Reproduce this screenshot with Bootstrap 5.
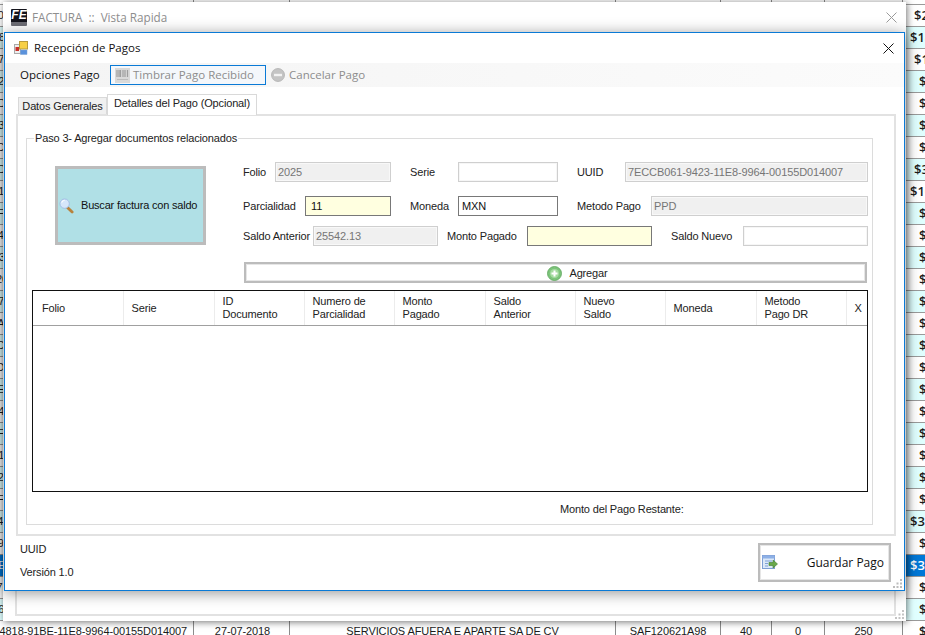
<!DOCTYPE html>
<html lang="es">
<head>
<meta charset="utf-8">
<title>Recepción de Pagos</title>
<link href="https://cdn.jsdelivr.net/npm/bootstrap@5.3.0/dist/css/bootstrap.min.css" rel="stylesheet">
<style>
html,body{height:635px;overflow:hidden;background:#fff}
body{font:11px/14px "Liberation Sans",sans-serif;letter-spacing:-.15px;color:#1c1c1c;position:relative;width:925px}
/* datagrid behind the windows */
.grid-bg{position:absolute;left:-60px;top:-17px;width:1100px}
.grid-row{display:flex;height:22px;border-bottom:1px solid #9a9a9a;line-height:21px;background:#fff;white-space:nowrap;overflow:hidden;font-size:11px;letter-spacing:-.1px}
.grid-row.alt{background:#e0ffff}
.grid-row.sel{background:#0078d7;color:#fff}
.cell-uuid{width:254px;text-align:right;padding-right:6px;border-right:1px solid #8c8c8c;flex:none}
.cell-date{width:96px;text-align:center;border-right:1px solid #8c8c8c;flex:none;padding-left:2px}
.cell-name{width:326px;text-align:center;border-right:1px solid #8c8c8c;flex:none}
.cell-rfc{width:105px;text-align:center;border-right:1px solid #8c8c8c;flex:none}
.cell-a{width:51px;text-align:center;border-right:1px solid #8c8c8c;flex:none}
.cell-b{width:53px;text-align:center;border-right:1px solid #8c8c8c;flex:none}
.cell-c{width:78px;text-align:center;border-right:1px solid #8c8c8c;flex:none}
.cell-gap{width:709px;flex:none}
.cell-amt{font-size:13px;font-family:"Open Sans",sans-serif;font-weight:600;flex:none;letter-spacing:0}
.amt-s{padding-left:16px}.amt-m{padding-left:11px}.amt-l{padding-left:7px}
/* back window */
.back-win{position:absolute;left:3px;top:2px;width:903px;height:619px;background:#fff;box-shadow:1px 1px 7px rgba(0,0,0,.55);display:flex;flex-direction:column}
.back-title{height:30px;flex:none;padding-left:8px;color:#8e8e8e;font:11.700px/14px "Open Sans",sans-serif;letter-spacing:0;gap:5px;white-space:pre}
.fe-logo{width:16px;height:17px;background:#14141c;border-radius:1px;color:#fff;font:italic bold 12px/12px "Liberation Sans",sans-serif;text-align:center;flex:none;border-bottom:4px solid #6d6d75}
.back-x{margin-left:auto;margin-right:9px}
.back-panel{flex:1;margin:0 10px 5px 12px;border:2px solid #e2e2e2}
.grip{position:absolute;right:1px;bottom:1px}
/* front window */
.dlg{position:absolute;left:4px;top:32px;width:901px;height:559px;background:#fff;border:1px solid #0a7ad6;box-shadow:0 2px 14px rgba(0,0,0,.42);display:flex;flex-direction:column}
.dlg-title{height:30px;flex:none;padding-left:9px;gap:6px;font:11.500px/14px "Open Sans",sans-serif;letter-spacing:0;color:#111}
.dlg-x{margin-left:auto;margin-right:10px}
.tool-strip{height:24px;flex:none;padding-left:15px;background:linear-gradient(90deg,#f4f4f4,#fbfbfb);font:11.500px/14px "Open Sans",sans-serif;letter-spacing:0}
.tool-label{width:90px;flex:none;color:#111}
.tool-btn{width:156px;height:20px;border:1px solid #0a7ad6;background:#f4f7fb;color:#8d8d8d;padding:0 0 0 4px;gap:3px;flex:none;display:flex;align-items:center;font:11.500px/14px "Open Sans",sans-serif;border-radius:0}
.tool-plain{color:#8d8d8d;gap:4px;margin-left:5px}
.tabbar{margin:7px 0 0 13px;height:20px;flex:none;align-items:flex-end;border:0;position:relative;z-index:2;white-space:nowrap}
.tab-off{width:89px;height:17px;background:#f0f0f0;border:1px solid #d9d9d9;border-bottom:0;line-height:16px;text-align:center;color:#222}
.tab-on{width:150px;height:21px;background:#fff;border:1px solid #d9d9d9;border-bottom:0;line-height:17px;text-align:center;color:#222;margin-bottom:-1px}
.tab-panel{margin:0 0 0 11px;width:880px;height:422px;flex:none;border:2px solid #e2e2e2;background:#fff;padding:15px 21px 0 8px}
.step{margin:0;width:847px;height:394px;border:1px solid #dcdcdc;padding:17px 4px 0 5px;min-width:0}
.step legend{float:none;width:auto;margin:0 0 0 2px;padding:0 1px;font-size:11px;line-height:14px;color:#222;letter-spacing:-.15px}
.search-btn{width:151px;height:79px;margin:4px 37px 0 23px;background:#b0e0e6;border:3px solid #bcbcbc;border-radius:0;padding:0 0 0 1px;font-size:11px;letter-spacing:-.2px;color:#111;gap:7px;flex:none;display:flex;align-items:center;white-space:nowrap}
.search-btn:hover{background:#b0e0e6}
.fields{width:625px;flex:none}
.field-row{display:flex;height:20px;align-items:center;white-space:nowrap}
.row-b{margin-top:14px}.row-c{margin-top:10px}
.lab{flex:none;color:#222}
.gap-s{margin-left:9px}.gap-m{margin-left:19px}
.l32{width:32px}.l48{width:48px}.l62{width:62px}.l70{width:70px}.l72{width:72px}.l74{width:74px}.l80{width:80px}
.box{flex:none;height:20px;border-radius:0;padding:0 2px;font-size:11px;line-height:18px;min-height:0;color:#111;font-family:"Liberation Sans",sans-serif;letter-spacing:-.1px}
.box:disabled,.box.off{background:#f0f0f0;border:1px solid #cfcfcf;color:#767676;opacity:1;box-shadow:inset 0 0 0 1px #f8f8f8}
.box.empty{background:#fff;border:1px solid #cfcfcf;box-shadow:inset 0 0 0 1px #f6f6f6}
.box.on{background:#fff;border:1px solid #787878;padding-left:3px}
.box.warm{background:#ffffe0;border:1px solid #787878;padding-left:5px}
.i86{width:86px}.i100{width:100px}.i116{width:116px}.i125{width:125px}.i217{width:217px}.i243{width:243px}
.add-btn{display:flex;justify-content:center;align-items:center;gap:7px;width:623px;height:21px;margin:16px 0 0 212px;background:#fff;border:2px solid #bcbcbc;box-shadow:inset 0 0 0 1px #e6e6e6;border-radius:0;padding:1px 0 0 44px;font-size:11px;letter-spacing:-.15px;color:#222}
.grid-wrap{width:836px;height:202px;margin-top:7px;border:1px solid #111;background:#fff;overflow:hidden}
.doc-table{table-layout:fixed;width:834px;margin:0;font-size:11px;line-height:13px}
.doc-table th{height:34px;font-weight:400;padding:1px 0 0 8px;vertical-align:middle;border-bottom:1px solid #a0a0a0;border-right:1px solid #ececec;color:#222;background:#fff;box-shadow:none}
.doc-table th:first-child{padding-left:9px}
.doc-table th:last-child{border-right:0}
.c90a{width:90px}.c91{width:91px}.c90{width:90px}
.remain{margin:10px 0 0 528px;line-height:14px;color:#222}
.dlg-foot{flex:1;display:flex;padding-left:15px}
.foot-txt{padding-top:6px}
.foot-b{margin-top:9px}
.save-btn{margin:7px 13px 0 auto;width:133px;height:39px;background:#fff;border:2px solid #bcbcbc;box-shadow:inset 0 0 0 1px #e6e6e6;border-radius:0;padding:0 5px 0 2px;font:12px "Open Sans",sans-serif;color:#111;display:flex;align-items:center;justify-content:space-between}
</style>
</head>
<body>
<div class="grid-bg">
<div class="grid-row"><span class="cell-uuid"></span><span class="cell-date"></span><span class="cell-name"></span><span class="cell-rfc"></span><span class="cell-a"></span><span class="cell-b"></span><span class="cell-c"></span></div>
<div class="grid-row"><span class="cell-uuid">2B1F0C44-91BE-11E8-9964-00155D014007</span><span class="cell-gap"></span><span class="cell-amt amt-m">$2,500.00</span></div>
<div class="grid-row alt"><span class="cell-uuid">B31A8F10-91BE-11E8-9964-00155D014007</span><span class="cell-gap"></span><span class="cell-amt amt-l">$18,200.00</span></div>
<div class="grid-row"><span class="cell-uuid">1C4D7A02-91BE-11E8-9964-00155D014007</span><span class="cell-gap"></span><span class="cell-amt amt-m">$1,250.00</span></div>
<div class="grid-row alt"><span class="cell-uuid">F07A2E33-91BE-11E8-9964-00155D014007</span><span class="cell-gap"></span><span class="cell-amt amt-s">$250.00</span></div>
<div class="grid-row"><span class="cell-uuid">A2C9D155-91BE-11E8-9964-00155D014007</span><span class="cell-gap"></span><span class="cell-amt amt-s">$310.00</span></div>
<div class="grid-row alt"><span class="cell-uuid">0DE63B71-91BE-11E8-9964-00155D014007</span><span class="cell-gap"></span><span class="cell-amt amt-s">$420.00</span></div>
<div class="grid-row"><span class="cell-uuid">7BA1C8E4-91BE-11E8-9964-00155D014007</span><span class="cell-gap"></span><span class="cell-amt amt-s">$180.00</span></div>
<div class="grid-row alt"><span class="cell-uuid">3F52D096-91BE-11E8-9964-00155D014007</span><span class="cell-gap"></span><span class="cell-amt amt-m">$3,400.00</span></div>
<div class="grid-row"><span class="cell-uuid">E94B1A27-91BE-11E8-9964-00155D014007</span><span class="cell-gap"></span><span class="cell-amt amt-l">$10,600.00</span></div>
<div class="grid-row alt"><span class="cell-uuid">6C08F3D1-91BE-11E8-9964-00155D014007</span><span class="cell-gap"></span><span class="cell-amt amt-s">$250.00</span></div>
<div class="grid-row"><span class="cell-uuid">D17E4C60-91BE-11E8-9964-00155D014007</span><span class="cell-gap"></span><span class="cell-amt amt-s">$275.00</span></div>
<div class="grid-row alt"><span class="cell-uuid">12A93F85-91BE-11E8-9964-00155D014007</span><span class="cell-gap"></span><span class="cell-amt amt-s">$390.00</span></div>
<div class="grid-row"><span class="cell-uuid">1F6B20DC-91BE-11E8-9964-00155D014007</span><span class="cell-gap"></span><span class="cell-amt amt-s">$510.00</span></div>
<div class="grid-row alt"><span class="cell-uuid">C85D7E19-91BE-11E8-9964-00155D014007</span><span class="cell-gap"></span><span class="cell-amt amt-s">$640.00</span></div>
<div class="grid-row"><span class="cell-uuid">8E31AB47-91BE-11E8-9964-00155D014007</span><span class="cell-gap"></span><span class="cell-amt amt-s">$720.00</span></div>
<div class="grid-row alt"><span class="cell-uuid">46F2C09B-91BE-11E8-9964-00155D014007</span><span class="cell-gap"></span><span class="cell-amt amt-s">$150.00</span></div>
<div class="grid-row"><span class="cell-uuid">AA07D3E2-91BE-11E8-9964-00155D014007</span><span class="cell-gap"></span><span class="cell-amt amt-s">$330.00</span></div>
<div class="grid-row alt"><span class="cell-uuid">59C6E18F-91BE-11E8-9964-00155D014007</span><span class="cell-gap"></span><span class="cell-amt amt-s">$480.00</span></div>
<div class="grid-row"><span class="cell-uuid">E2B04A73-91BE-11E8-9964-00155D014007</span><span class="cell-gap"></span><span class="cell-amt amt-s">$260.00</span></div>
<div class="grid-row alt"><span class="cell-uuid">340DF8A6-91BE-11E8-9964-00155D014007</span><span class="cell-gap"></span><span class="cell-amt amt-s">$590.00</span></div>
<div class="grid-row"><span class="cell-uuid">97AC15E0-91BE-11E8-9964-00155D014007</span><span class="cell-gap"></span><span class="cell-amt amt-s">$205.00</span></div>
<div class="grid-row alt"><span class="cell-uuid">B6E32D58-91BE-11E8-9964-00155D014007</span><span class="cell-gap"></span><span class="cell-amt amt-s">$615.00</span></div>
<div class="grid-row"><span class="cell-uuid">2D79F1C4-91BE-11E8-9964-00155D014007</span><span class="cell-gap"></span><span class="cell-amt amt-s">$340.00</span></div>
<div class="grid-row alt"><span class="cell-uuid">F1804BA3-91BE-11E8-9964-00155D014007</span><span class="cell-gap"></span><span class="cell-amt amt-l">$3,100.00</span></div>
<div class="grid-row"><span class="cell-uuid">71CE92D6-91BE-11E8-9964-00155D014007</span><span class="cell-gap"></span><span class="cell-amt amt-s">$295.00</span></div>
<div class="grid-row sel"><span class="cell-uuid">5A13E607-91BE-11E8-9964-00155D014007</span><span class="cell-gap"></span><span class="cell-amt amt-l">$3,800.00</span></div>
<div class="grid-row"><span class="cell-uuid">C04F7D2B-91BE-11E8-9964-00155D014007</span><span class="cell-gap"></span><span class="cell-amt amt-s">$410.00</span></div>
<div class="grid-row alt"><span class="cell-uuid">8BD26E91-91BE-11E8-9964-00155D014007</span><span class="cell-gap"></span><span class="cell-amt amt-s">$530.00</span></div>
<div class="grid-row"><span class="cell-uuid">64818-91BE-11E8-9964-00155D014007</span><span class="cell-date">27-07-2018</span><span class="cell-name">SERVICIOS AFUERA E APARTE SA DE CV</span><span class="cell-rfc">SAF120621A98</span><span class="cell-a">40</span><span class="cell-b">0</span><span class="cell-c">250</span><span class="cell-amt amt-s">$250.00</span></div>
</div>

<div class="back-win">
  <div class="back-title d-flex align-items-center">
    <span class="fe-logo">FE</span><span>FACTURA  ::  Vista Rapida</span>
    <svg class="back-x" width="11" height="11" viewBox="0 0 11 11"><path d="M.5.5l10 10M10.5.5l-10 10" stroke="#9a9a9a" fill="none"/></svg>
  </div>
  <div class="back-panel"></div>
  <svg class="grip" width="10" height="10" viewBox="0 0 10 10" fill="#c4c4c4"><path d="M7 0h2v2H7zM3.500 3.500h2v2h-2zM7 3.500h2v2H7zM0 7h2v2H0zM3.500 7h2v2h-2zM7 7h2v2H7z"/></svg>
</div>

<div class="dlg">
  <div class="dlg-title d-flex align-items-center">
    <svg width="14" height="14" viewBox="0 0 14 14"><rect x=".5" y="3.500" width="6" height="9" fill="#eee" stroke="#aaa"/><rect x="1.500" y="6" width="3.500" height="4" fill="#c8302a"/><rect x="5.500" y=".5" width="8" height="7.500" fill="#f7cf45" stroke="#b99a3a"/><rect x="6.500" y="9" width="6.500" height="4.500" fill="#5a92dc" stroke="#7fa5d8" stroke-width=".5"/></svg>
    <span>Recepción de Pagos</span>
    <svg class="dlg-x" width="11" height="11" viewBox="0 0 11 11"><path d="M.5.5l10 10M10.5.5l-10 10" stroke="#111" fill="none"/></svg>
  </div>
  <div class="tool-strip d-flex align-items-center">
    <span class="tool-label">Opciones Pago</span>
    <button type="button" class="btn tool-btn">
      <svg width="15" height="15" viewBox="0 0 15 15"><rect width="15" height="15" fill="#d9d9d9"/><path d="M2 2v7M4 2v7M5.500 2v7M8 2v7M10 2v7M12.500 2v7" stroke="#9e9e9e" stroke-width="1.200"/><path d="M2 11.500h11" stroke="#bcbcbc"/></svg>
      <span>Timbrar Pago Recibido</span>
    </button>
    <span class="tool-plain d-flex align-items-center">
      <svg width="14" height="14" viewBox="0 0 14 14"><circle cx="7" cy="7" r="6.500" fill="#c4c4c4" stroke="#aaa" stroke-width=".7"/><rect x="3" y="5.800" width="8" height="2.400" fill="#f2f2f2"/></svg>
      <span>Cancelar Pago</span>
    </span>
  </div>
  <div class="nav tabbar d-flex">
    <span class="tab-off">Datos Generales</span>
    <span class="tab-on">Detalles del Pago (Opcional)</span>
  </div>
  <div class="tab-panel">
    <fieldset class="step">
      <legend>Paso 3- Agregar documentos relacionados</legend>
      <div class="d-flex">
        <button type="button" class="btn search-btn">
          <svg width="15" height="16" viewBox="0 0 16 17"><path d="M9 10l5 5" stroke="#b8823c" stroke-width="3" stroke-linecap="round"/><circle cx="6" cy="6" r="5" fill="#d6e6fa" stroke="#a0bce4"/><path d="M3 5a3 3 0 0 1 3-2.500" stroke="#fff" fill="none"/></svg>
          <span>Buscar factura con saldo</span>
        </button>
        <div class="fields">
          <div class="field-row">
            <label class="lab l32">Folio</label><input class="form-control box i116" disabled value="2025">
            <label class="lab l48 gap-m">Serie</label><input class="form-control box empty i100">
            <label class="lab l48 gap-m">UUID</label><input class="form-control box i243" disabled value="7ECCB061-9423-11E8-9964-00155D014007">
          </div>
          <div class="field-row row-b">
            <label class="lab l62">Parcialidad</label><input class="form-control box warm i86" value="11">
            <label class="lab l48 gap-m">Moneda</label><input class="form-control box on i100" value="MXN">
            <label class="lab l74 gap-m">Metodo Pago</label><input class="form-control box i217" disabled value="PPD">
          </div>
          <div class="field-row row-c">
            <label class="lab l70">Saldo Anterior</label><input class="form-control box i125" disabled value="25542.13">
            <label class="lab l80 gap-s">Monto Pagado</label><input class="form-control box warm i125">
            <label class="lab l72 gap-m">Saldo Nuevo</label><input class="form-control box empty i125">
          </div>
        </div>
      </div>
      <button type="button" class="btn add-btn">
        <svg width="15" height="15" viewBox="0 0 15 15"><circle cx="7.500" cy="7.500" r="7" fill="#7cc47a" stroke="#5da55c" stroke-width=".8"/><circle cx="7.500" cy="7.500" r="4.500" fill="#a5dba0"/><path d="M7.500 4.500v6M4.500 7.500h6" stroke="#fff" stroke-width="2"/></svg>
        <span>Agregar</span>
      </button>
      <div class="grid-wrap">
        <table class="table doc-table">
          <colgroup><col class="c90a"><col class="c91"><col class="c90"><col class="c90"><col class="c91"><col class="c90"><col class="c90"><col class="c91"><col class="c90"><col></colgroup>
          <thead><tr><th>Folio</th><th>Serie</th><th>ID<br>Documento</th><th>Numero de<br>Parcialidad</th><th>Monto<br>Pagado</th><th>Saldo<br>Anterior</th><th>Nuevo<br>Saldo</th><th>Moneda</th><th>Metodo<br>Pago DR</th><th>X</th></tr></thead>
        </table>
      </div>
      <div class="remain">Monto del Pago Restante:</div>
    </fieldset>
  </div>
  <div class="dlg-foot">
    <div class="foot-txt"><div>UUID</div><div class="foot-b">Versión 1.0</div></div>
    <button type="button" class="btn save-btn">
      <svg width="16" height="15" viewBox="0 0 16 15"><rect x=".5" y=".5" width="12" height="13" fill="#dbe8f8" stroke="#7e9fd4"/><rect x=".5" y=".5" width="12" height="3" fill="#8db0e6"/><path d="M3 6h7M3 8.500h3M3 11h3" stroke="#7fa2d6"/><path d="M7 7.500h4V5l4.500 4-4.500 4v-2.500H7z" fill="#6aa84a" stroke="#3f7d2e" stroke-width=".6"/></svg>
      <span>Guardar Pago</span>
    </button>
  </div>
  <svg class="grip" width="10" height="10" viewBox="0 0 10 10" fill="#bcbcbc"><path d="M7 0h2v2H7zM3.500 3.500h2v2h-2zM7 3.500h2v2H7zM0 7h2v2H0zM3.500 7h2v2h-2zM7 7h2v2H7z"/></svg>
</div>
<script src="https://cdn.jsdelivr.net/npm/bootstrap@5.3.0/dist/js/bootstrap.bundle.min.js"></script>
</body>
</html>
